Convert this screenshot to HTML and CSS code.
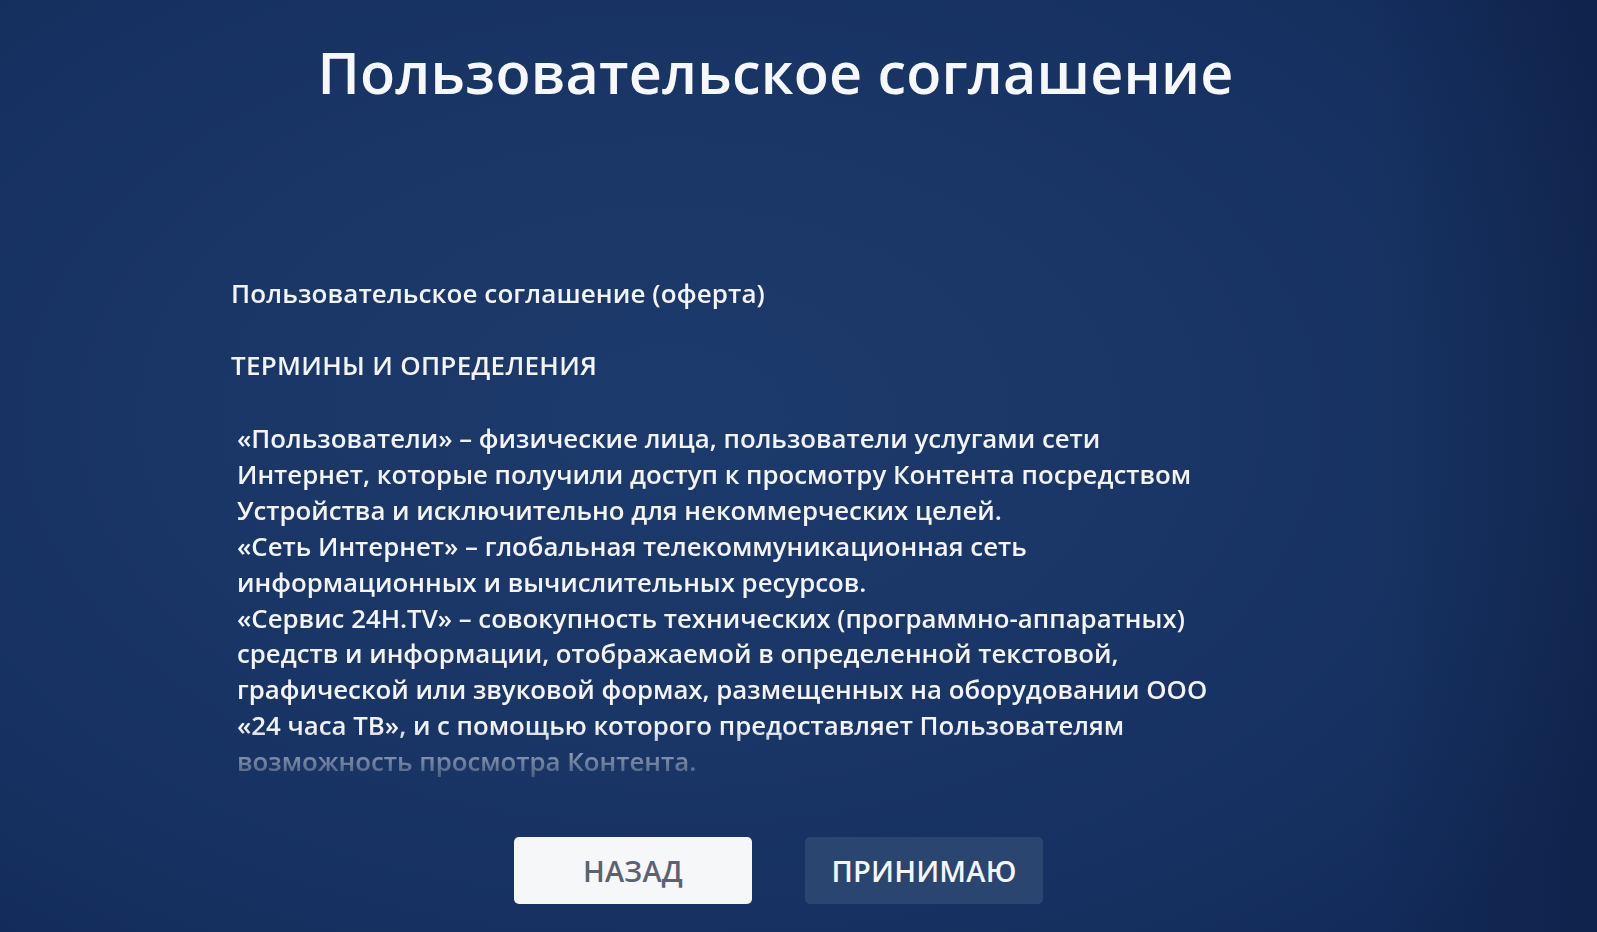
FILE: index.html
```html
<!DOCTYPE html>
<html lang="ru">
<head>
<meta charset="utf-8">
<title>Пользовательское соглашение</title>
<link rel="stylesheet" href="styles.css">
</head>
<body>
<div class="screen">
  <h1 class="title">Пользовательское соглашение</h1>
  <div class="doc">
    <p class="doc-head">Пользовательское соглашение (оферта)</p>
    <p class="doc-section">ТЕРМИНЫ И ОПРЕДЕЛЕНИЯ</p>
    <p class="doc-body">«Пользователи» – физические лица, пользователи услугами сети<br>Интернет, которые получили доступ к просмотру Контента посредством<br>Устройства и исключительно для некоммерческих целей.<br>«Сеть Интернет» – глобальная телекоммуникационная сеть<br>информационных и вычислительных ресурсов.<br>«Сервис 24H.TV» – совокупность технических (программно-аппаратных)<br>средств и информации, отображаемой в определенной текстовой,<br>графической или звуковой формах, размещенных на оборудовании ООО<br>«24 часа ТВ», и с помощью которого предоставляет Пользователям<br>возможность просмотра Контента.</p>
  </div>
  <div class="actions">
    <button class="btn btn-light">НАЗАД</button>
    <button class="btn btn-dark">ПРИНИМАЮ</button>
  </div>
</div>
</body>
</html>
```
FILE: styles.css
```css
html, body {
  margin: 0;
  padding: 0;
}
body {
  font-family: "Open Sans", "Noto Sans", sans-serif;
  color: #f2f4f8;
  background: #142c57;
}
.screen {
  width: 1597px;
  height: 932px;
  overflow: hidden;
  display: flex;
  flex-direction: column;
  background:
    linear-gradient(90deg, rgba(8, 20, 45, 0) 0%, rgba(8, 20, 45, 0) 86%, rgba(8, 20, 45, 0.3) 100%),
    radial-gradient(ellipse 70% 75% at 42% 45%, #1c3a6c 0%, #1a3666 45%, #163161 75%, #122a59 100%);
}
.title {
  margin: 37px 0 0;
  padding-right: 46px;
  text-align: center;
  font-size: 57.5px;
  line-height: 70px;
  font-weight: 600;
  color: #f7f8fb;
  letter-spacing: 0.2px;
}
.doc {
  margin-top: 169px;
  padding-left: 231px;
  height: 503px;
  overflow: hidden;
  -webkit-mask-image: linear-gradient(180deg, #000 0%, #000 90%, rgba(0,0,0,0.45) 96%, rgba(0,0,0,0.2) 100%);
  mask-image: linear-gradient(180deg, #000 0%, #000 90%, rgba(0,0,0,0.45) 96%, rgba(0,0,0,0.2) 100%);
}
.doc p {
  margin: 0;
  white-space: nowrap;
}
.doc-head {
  font-size: 26px;
  line-height: 35px;
  font-weight: 600;
  letter-spacing: 0.1px;
}
.doc-section {
  margin-top: 37px !important;
  font-size: 26px;
  line-height: 35px;
  font-weight: 600;
  letter-spacing: 0.3px;
}
.doc-body {
  margin-top: 38px !important;
  padding-left: 6px;
  font-size: 25.8px;
  line-height: 35.9px;
  font-weight: 600;
}
.actions {
  margin-top: 58px;
  padding-right: 40px;
  display: flex;
  justify-content: center;
  gap: 53px;
}
.btn {
  width: 238px;
  height: 67px;
  border: 0;
  border-radius: 5px;
  font-family: "Open Sans", "Noto Sans", sans-serif;
  font-size: 29px;
  font-weight: 600;
  letter-spacing: 0.2px;
  padding: 0;
}
.btn-light {
  background: #f6f7f9;
  color: #5b6372;
}
.btn-dark {
  background: #2a4570;
  color: #f4f6fa;
}
```
